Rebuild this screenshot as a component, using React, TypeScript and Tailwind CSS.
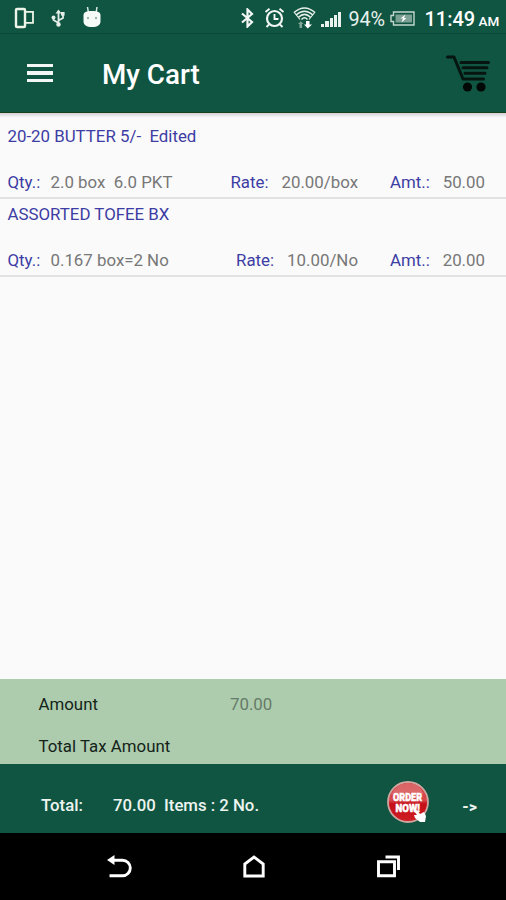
const ITEMS = [
  {
    name: '20-20 BUTTER 5/-  Edited',
    qty: '2.0 box  6.0 PKT',
    rate: '20.00/box',
    amount: '50.00',
  },
  {
    name: 'ASSORTED TOFEE BX',
    qty: '0.167 box=2 No',
    rate: '10.00/No',
    amount: '20.00',
  },
]

interface CartItem {
  name: string
  qty: string
  rate: string
  amount: string
}

const SIGNAL = [3, 6, 9, 12, 15]

function StatusBar() {
  return (
    <div className="flex h-[34px] shrink-0 items-start border-b border-[#0d4837] text-white">
      <svg className="ml-[14px] mt-[7px] h-[22px] w-[20px]" viewBox="0 0 20 22" fill="none" stroke="#eef5e8">
        <rect x="2" y="2" width="9" height="18" rx="1" strokeWidth="2.4" />
        <path d="M12 4.8h7v11h-7" strokeWidth="1.8" />
      </svg>
      <svg className="ml-[17px] mt-[9px] h-[18px] w-[14px]" viewBox="0 0 14 18" fill="none" stroke="#e3eee8" strokeWidth="1.8">
        <path d="M7.5 2v14M7.5 14L2.5 11V8M7.5 11.5L12 9V5" />
        <path d="M4.5 4.5L7.5 .5L10.5 4.5z" fill="#e3eee8" stroke="none" />
        <circle cx="2.5" cy="8.5" r="2" fill="#e3eee8" stroke="none" />
        <circle cx="7.5" cy="15.5" r="2.2" fill="#e3eee8" stroke="none" />
        <path d="M10 3h3.6v3.6H10z" fill="#e3eee8" stroke="none" />
      </svg>
      <svg className="ml-[18px] mt-[6px] h-[21px] w-[19px]" viewBox="0 0 19 21">
        <path d="M4.500 1l.8 5M14 1l-.8 5" stroke="#dceae3" strokeWidth="1.5" />
        <path d="M.5 9.500c0-3.500 3-4.500 8.500-4.500s8.500 1 8.500 4.500V15c0 4-3 6-8.500 6S.5 19 .5 15z" fill="#f7fbf8" />
        <circle cx="5" cy="12" r="1.200" fill="#9db8af" />
        <circle cx="13" cy="12" r="1.200" fill="#9db8af" />
      </svg>
      <svg className="ml-[139px] mt-[8px] h-[20px] w-[13px]" viewBox="0 0 13 20" fill="none" stroke="#f2f7f4" strokeWidth="2.2">
        <path d="M1 5.500l10 8.500-4.500 4.500v-17L11 6 1 14.500" />
      </svg>
      <svg className="ml-[10px] mt-[7px] h-[21px] w-[21px]" viewBox="0 0 21 21" fill="none" stroke="#f2f7f4" strokeWidth="2.2">
        <circle cx="10.500" cy="11.500" r="7.500" />
        <path d="M10.500 7v5h4M1.500 5l4-3.300M19.500 5l-4-3.300M5 17.500L2.500 20M16 17.500l2.500 2.500" strokeWidth="1.9" />
      </svg>
      <svg className="ml-[8px] mt-[7px] h-[22px] w-[23px]" viewBox="0 0 23 22" fill="none" stroke="#e6f0e8" strokeWidth="1.5">
        <path d="M1 5.500Q11.500-3.500 22 5.500M3 8Q11.500 .5 20 8M5.500 10.300Q11.500 4.500 17.500 10.300M8.500 12.500Q11.500 9 14.500 12.500" />
        <path d="M1 5l6 7.500M22 5l-6 7.500" strokeWidth="1.2" />
        <path d="M6.500 21v-4H5L7.800 14.200l2.700 2.800H9v4z" fill="#7ea596" stroke="none" />
        <path d="M13 14h3.500v3.500h2.500L14.800 21.500 11 17.500h2z" fill="#ffffff" stroke="none" />
      </svg>
      <div className="ml-[5px] mt-[11px] flex h-[16px] items-end gap-[1px]">
        {SIGNAL.map((h) => (
          <span key={h} className="w-[3.300px] bg-[#eaf2ee]" style={{ height: h }} />
        ))}
      </div>
      <span className="ml-[7px] mt-[8px] w-[37px] whitespace-nowrap text-[19.800px] leading-[23px] tracking-[-0.100px] text-[#e8f1ed]">
        94%
      </span>
      <svg className="ml-[5px] mt-[11px] h-[15px] w-[25px]" viewBox="0 0 25 15" fill="none" stroke="#c4d6cf">
        <path d="M3.500 1h20.500v13H3.500v-3.500H1v-6h2.500z" strokeWidth="1.4" />
        <path d="M5.500 3.500h16.500v8H5.500z" fill="#7da295" stroke="none" />
        <path d="M15.500 3.500l-5 4h2.500l-1.500 4 5-4.500h-2.500z" fill="#ffffff" stroke="none" />
      </svg>
      <span className="ml-[9px] mt-[8px] w-[50px] whitespace-nowrap text-[20px] font-medium leading-[23px]">11:49</span>
      <span className="ml-[4px] mt-[13px] whitespace-nowrap text-[13.500px] font-medium leading-[16px]">AM</span>
    </div>
  )
}

function Header() {
  return (
    <header className="flex h-[79px] shrink-0 items-center border-b border-[#174118]">
      <div className="ml-[27px] flex w-[26px] flex-col gap-1">
        <span className="h-[3.500px] bg-[#f3f7f5]" />
        <span className="h-[3.500px] bg-[#f3f7f5]" />
        <span className="h-[3.500px] bg-[#f3f7f5]" />
      </div>
      <h1 className="ml-[49px] mt-[4px] text-[27.800px] font-medium leading-8 text-white">My Cart</h1>
      <svg className="ml-auto mr-[15px] h-[38px] w-[46px]" viewBox="0 0 46 38" fill="none" stroke="#06150f">
        <path d="M2.500 3h6.500l9 22h20.500" strokeWidth="3" strokeLinecap="round" strokeLinejoin="round" />
        <path d="M16 8.500h27.500M18 13.800h24M20 19.300h20" strokeWidth="3" strokeLinecap="round" />
        <circle cx="22.500" cy="33" r="4.6" fill="#020806" stroke="none" />
        <circle cx="36" cy="33" r="4.6" fill="#020806" stroke="none" />
      </svg>
    </header>
  )
}

function CartRow({ name, qty, rate, amount }: CartItem) {
  return (
    <li className="flex h-[78px] flex-col justify-between whitespace-pre border-b-2 border-[#e2e2e3] pb-[5px] pl-[7.500px] pr-[21px] pt-[5px] text-[16.850px] leading-5 text-[#777777]">
      <div className="text-[#3d3da4]">{name}</div>
      <div className="flex">
        <span className="w-[43px] text-[#3d3da4]">Qty.:</span>
        <span>{qty}</span>
        <span className="ml-auto text-[#3d3da4]">Rate:</span>
        <span className="ml-[13px]">{rate}</span>
        <span className="ml-[32px] w-[52px] text-[#3d3da4]">Amt.:</span>
        <span className="w-[43px] text-right">{amount}</span>
      </div>
    </li>
  )
}

function OrderButton() {
  return (
    <button type="button" aria-label="Order now" className="h-[44px] w-[44px]">
      <svg viewBox="0 0 44 44" className="size-full">
        <defs>
          <linearGradient id="badge" x1="0" y1="0" x2="0" y2="1">
            <stop offset="0" stopColor="#c93238" />
            <stop offset=".45" stopColor="#d84a4e" />
            <stop offset=".55" stopColor="#c50f18" />
            <stop offset="1" stopColor="#cf1e25" />
          </linearGradient>
        </defs>
        <circle cx="22" cy="22" r="20" fill="url(#badge)" stroke="#cfa5a0" strokeWidth="1.8" />
        <path d="M5 15Q11 3 22 3t16 11Q21 11 5 15z" fill="#e58b8b" opacity=".55" />
        <g fill="#fff" stroke="#fff" strokeWidth=".5" fontFamily="Roboto, sans-serif" fontWeight="900" fontSize="11.500">
          <text transform="translate(7 20.500) scale(.79 1)">ORDER</text>
          <text transform="translate(9.500 32) scale(.84 1)">NOW!</text>
        </g>
        <path d="M28 31l3-1 3 4 4-2 2 4-1 6h-5l-5-4-1-3 3 0z" fill="#fff" />
      </svg>
    </button>
  )
}

function Summary() {
  return (
    <section className="h-[85px] shrink-0 bg-[#adccad] pl-[38.500px] pt-[15px] text-[16.850px] leading-5 text-[#14231a]">
      <div className="flex">
        <span className="w-[191.500px]">Amount</span>
        <span className="text-[#667b68]">70.00</span>
      </div>
      <div className="mt-[22px]">Total Tax Amount</div>
    </section>
  )
}

function NavBar() {
  return (
    <nav className="flex h-[67px] shrink-0 items-start bg-black pt-[20px]">
      <svg className="ml-[106px] h-[28px] w-[28px]" viewBox="0 0 28 28" fill="none" stroke="#fff" strokeWidth="2.9">
        <path d="M7 7.200h9.500a7.700 7.700 0 0 1 0 15.600H3.500" />
        <path d="M1 7l7.500-5v10z" fill="#fff" stroke="none" />
      </svg>
      <svg className="ml-[106.500px] h-[28px] w-[26px]" viewBox="0 0 26 28" fill="none" stroke="#fff" strokeWidth="2.9">
        <path d="M3.800 23V11L13 4l9.200 7v12z" />
      </svg>
      <svg className="ml-[108px] h-[28px] w-[28px]" viewBox="0 0 28 28" fill="none" stroke="#fff">
        <path d="M3.500 8.800h16v14h-16z" strokeWidth="2.9" />
        <path d="M10.500 4h13V17" strokeWidth="2.9" />
      </svg>
    </nav>
  )
}

export default function App() {
  return (
    <div className="flex h-[900px] w-[506px] flex-col overflow-hidden bg-[#105542] font-['Roboto',sans-serif]">
      <StatusBar />
      <Header />
      <main className="flex-1 bg-[#fafafa]">
        <div className="h-2 bg-linear-to-b from-[#d2d0d6] to-[#fafafa] to-60%" />
        <ul>
          {ITEMS.map((item) => (
            <CartRow key={item.name} {...item} />
          ))}
        </ul>
      </main>
      <Summary />
      <footer className="flex h-[69px] shrink-0 items-center whitespace-pre pt-[15px] text-[16.750px] font-medium text-[#edf4f0]">
        <span className="ml-[41px] w-[72px]">Total:</span>
        <span>70.00  Items : 2 No.</span>
        <div className="ml-auto mr-[32px]">
          <OrderButton />
        </div>
        <span className="w-[44px] pt-[3px] text-[15.500px] font-black">{'->'}</span>
      </footer>
      <NavBar />
    </div>
  )
}
